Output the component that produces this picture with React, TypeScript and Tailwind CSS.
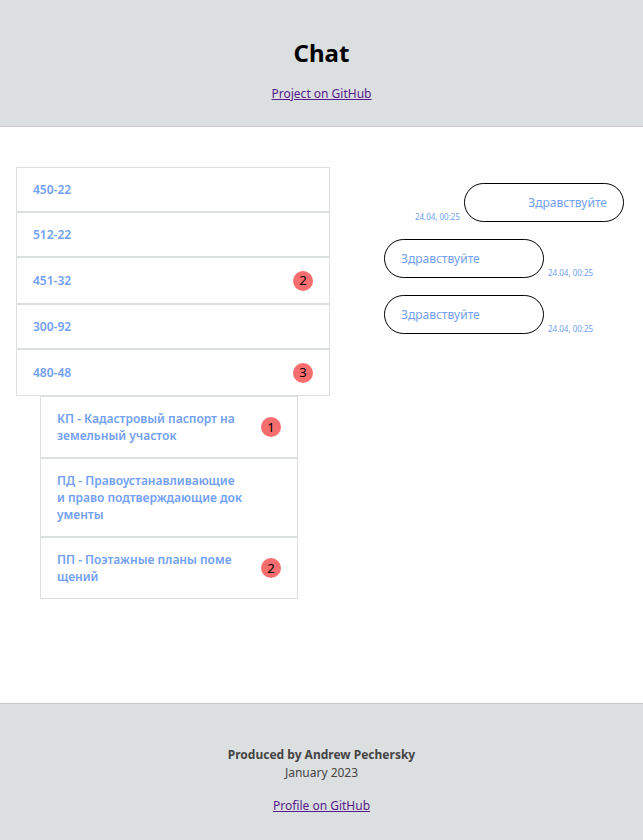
import React from "react";

type Room = { name: string; unread?: number };

const rooms: Room[] = [
  { name: "450-22" },
  { name: "512-22" },
  { name: "451-32", unread: 2 },
  { name: "300-92" },
  { name: "480-48", unread: 3 },
];

const docs: Room[] = [
  { name: "КП - Кадастровый паспорт на земельный участок", unread: 1 },
  { name: "ПД - Правоустанавливающие и право подтверждающие документы" },
  { name: "ПП - Поэтажные планы помещений", unread: 2 },
];

const messages = [
  { text: "Здравствуйте", time: "24.04, 00:25", mine: true },
  { text: "Здравствуйте", time: "24.04, 00:25", mine: false },
  { text: "Здравствуйте", time: "24.04, 00:25", mine: false },
];

function Badge({ n }: { n: number }) {
  return (
    <span className="flex h-5 w-5 shrink-0 items-center justify-center rounded-full bg-[#f86d6d] text-[13px] leading-none text-black">
      {n}
    </span>
  );
}

export default function App() {
  return (
    <div className="flex min-h-screen flex-col bg-white font-['Noto_Sans',sans-serif]">
      <header className="flex h-[127px] flex-col items-center border-b border-[#c8c8c8] bg-[#dcdfe0] pt-[36px]">
        <h1 className="text-[24px] font-bold leading-[34px] text-black">Chat</h1>
        <a href="#" className="mt-[15px] text-[12px] leading-[18px] text-[#551a8b] underline">
          Project on GitHub
        </a>
      </header>

      <main className="flex flex-1 px-4 pt-10">
        <div className="w-[314px] shrink-0">
          {rooms.map((r) => (
            <div
              key={r.name}
              className="flex items-center justify-between border border-[#dcdfe0] py-[12.5px] pl-4 pr-4"
            >
              <span className="text-[12px] font-semibold leading-[18px] text-[#72a0f4]">{r.name}</span>
              {r.unread ? <Badge n={r.unread} /> : null}
            </div>
          ))}
          <div className="ml-6 w-[258px]">
            {docs.map((d) => (
              <div
                key={d.name}
                className="flex items-center justify-between border border-[#dcdfe0] py-[13px] pl-4 pr-4"
              >
                <span className="w-[185.5px] break-all text-[12px] font-semibold leading-[17px] text-[#72a0f4]">
                  {d.name}
                </span>
                {d.unread ? <Badge n={d.unread} /> : null}
              </div>
            ))}
          </div>
        </div>

        <div className="flex-1 pl-[54px] pr-[3px]">
          <div className="flex w-[240px] flex-col gap-[17px] pt-4">
            {messages.map((m, i) => (
              <div
                key={i}
                className={`flex items-end gap-1 ${m.mine ? "flex-row-reverse justify-start" : "justify-start"}`}
              >
                <div
                  className={`flex h-[39px] w-[160px] items-center rounded-full border border-black px-4 text-[12px] text-[#72a0f4] ${
                    m.mine ? "justify-end" : "justify-start"
                  }`}
                >
                  {m.text}
                </div>
                <span className="text-[8px] leading-[10px] text-[#72a0f4]">{m.time}</span>
              </div>
            ))}
          </div>
        </div>
      </main>

      <footer className="flex h-[137px] flex-col items-center border-t border-[#c8c8c8] bg-[#dcdfe0] pt-[42px]">
        <p className="text-[12px] font-bold leading-[18px] text-[#444]">Produced by Andrew Pechersky</p>
        <p className="text-[12px] leading-[18px] text-[#444]">January 2023</p>
        <a href="#" className="mt-[15px] text-[12px] leading-[18px] text-[#551a8b] underline">
          Profile on GitHub
        </a>
      </footer>
    </div>
  );
}
